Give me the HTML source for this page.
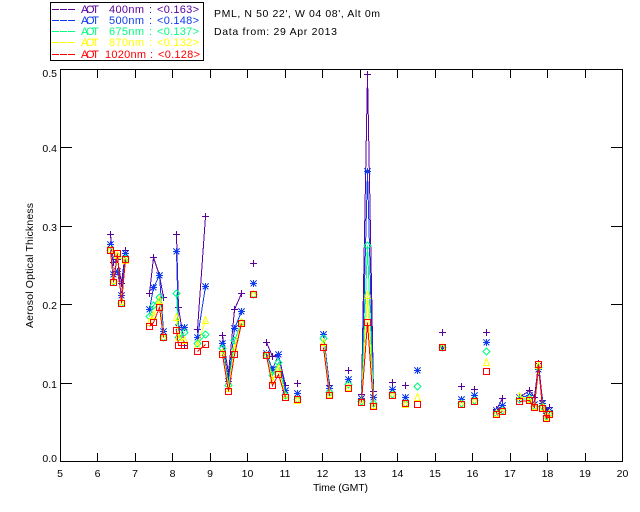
<!DOCTYPE html>
<html><head><meta charset="utf-8"><style>
html,body{margin:0;padding:0;background:#fff;width:640px;height:512px;overflow:hidden}
svg{display:block}
text{font-family:"Liberation Sans",sans-serif;font-size:10.5px;fill:#000}
.l{font-size:11px}
.p{fill:#5a009d}.b{fill:#0f3cf0}.g{fill:#00ff80}.y{fill:#ffff00}.r{fill:#ff0000}
</style></head><body>
<svg width="640" height="512" viewBox="0 0 640 512" xmlns="http://www.w3.org/2000/svg">
<defs>
<marker id="mp" markerUnits="userSpaceOnUse" markerWidth="13" markerHeight="13" refX="6.5" refY="6.5" overflow="visible"><path d="M3 6.5H10M6.5 3V10" fill="none" stroke="#5a009d" stroke-width="1" shape-rendering="crispEdges"/></marker>
<marker id="ms" markerUnits="userSpaceOnUse" markerWidth="13" markerHeight="13" refX="6.5" refY="6.5" overflow="visible"><path d="M3 6.5H10M6.5 3V10M3.5 3.5L9.5 9.5M9.5 3.5L3.5 9.5" fill="none" stroke="#0f3cf0" stroke-width="1" shape-rendering="crispEdges"/><rect x="5" y="5" width="3" height="3" fill="#0f3cf0" shape-rendering="crispEdges"/></marker>
<marker id="md" markerUnits="userSpaceOnUse" markerWidth="13" markerHeight="13" refX="6.5" refY="6.5" overflow="visible"><path d="M6.5 3L10 6.5L6.5 10L3 6.5Z" fill="none" stroke="#00ff80" stroke-width="1" shape-rendering="crispEdges"/></marker>
<marker id="mt" markerUnits="userSpaceOnUse" markerWidth="13" markerHeight="13" refX="6.5" refY="6.5" overflow="visible"><path d="M6.5 2.5L9.5 9.5H3.5Z" fill="none" stroke="#ffff00" stroke-width="1" shape-rendering="crispEdges"/></marker>
<marker id="mq" markerUnits="userSpaceOnUse" markerWidth="13" markerHeight="13" refX="6.5" refY="6.5" overflow="visible"><rect x="3.5" y="3.5" width="6" height="6" fill="none" stroke="#ff0000" stroke-width="1" shape-rendering="crispEdges"/></marker>
</defs>

<!-- legend box -->
<rect x="50.5" y="2.5" width="153" height="58" fill="none" stroke="#000" shape-rendering="crispEdges"/>
<g stroke-dasharray="7 1" shape-rendering="crispEdges">
<path d="M52 9.5H75" stroke="#5a009d"/>
<path d="M52 20.5H75" stroke="#0f3cf0"/>
<path d="M52 31.5H75" stroke="#00ff80"/>
<path d="M52 42.5H75" stroke="#ffff00"/>
<path d="M52 54.5H75" stroke="#ff0000"/>
</g>
<text class="l p" x="81" y="13" textLength="18">AOT</text><text class="l p" x="109" y="13" textLength="35">400nm</text><text class="l p" x="149" y="13">:</text><text class="l p" x="157" y="13" textLength="42">&lt;0.163&gt;</text>
<text class="l b" x="81" y="24" textLength="18">AOT</text><text class="l b" x="109" y="24" textLength="35">500nm</text><text class="l b" x="149" y="24">:</text><text class="l b" x="157" y="24" textLength="42">&lt;0.148&gt;</text>
<text class="l g" x="81" y="35" textLength="18">AOT</text><text class="l g" x="109" y="35" textLength="35">675nm</text><text class="l g" x="149" y="35">:</text><text class="l g" x="157" y="35" textLength="42">&lt;0.137&gt;</text>
<text class="l y" x="81" y="46" textLength="18">AOT</text><text class="l y" x="109" y="46" textLength="35">870nm</text><text class="l y" x="149" y="46">:</text><text class="l y" x="157" y="46" textLength="42">&lt;0.132&gt;</text>
<text class="l r" x="81" y="58" textLength="18">AOT</text><text class="l r" x="105" y="58" textLength="41">1020nm</text><text class="l r" x="150" y="58">:</text><text class="l r" x="158" y="58" textLength="42">&lt;0.128&gt;</text>
<text x="214" y="17" textLength="166" lengthAdjust="spacing">PML, N 50 22', W 04 08', Alt 0m</text>
<text x="214" y="35" textLength="123" lengthAdjust="spacing">Data from: 29 Apr 2013</text>

<!-- axes -->
<g fill="none" stroke="#000" shape-rendering="crispEdges">
<rect x="60.5" y="69.5" width="562" height="392"/>
<path d="M97.5 461V453M135.5 461V453M172.5 461V453M210.5 461V453M247.5 461V453M285.5 461V453M322.5 461V453M360.5 461V453M397.5 461V453M435.5 461V453M472.5 461V453M510.5 461V453M547.5 461V453M585.5 461V453"/>
<path d="M97.5 70V78M135.5 70V78M172.5 70V78M210.5 70V78M247.5 70V78M285.5 70V78M322.5 70V78M360.5 70V78M397.5 70V78M435.5 70V78M472.5 70V78M510.5 70V78M547.5 70V78M585.5 70V78"/>
<path d="M61 147.5H72M61 226.5H72M61 304.5H72M61 383.5H72"/>
<path d="M622 147.5H611M622 226.5H611M622 304.5H611M622 383.5H611"/>
</g>
<g text-anchor="end">
<text x="57" y="77">0.5</text><text x="57" y="152">0.4</text><text x="57" y="231">0.3</text><text x="57" y="309">0.2</text><text x="57" y="388">0.1</text><text x="57" y="462">0.0</text>
</g>
<g text-anchor="middle">
<text x="60" y="477">5</text><text x="97.5" y="477">6</text><text x="135" y="477">7</text><text x="172.5" y="477">8</text><text x="210" y="477">9</text><text x="247.5" y="477">10</text><text x="285" y="477">11</text><text x="322.5" y="477">12</text><text x="360" y="477">13</text><text x="397.5" y="477">14</text><text x="435" y="477">15</text><text x="472.5" y="477">16</text><text x="510" y="477">17</text><text x="547.5" y="477">18</text><text x="585" y="477">19</text><text x="622.5" y="477">20</text>
</g>
<text x="313" y="491" textLength="55" lengthAdjust="spacing">Time (GMT)</text>
<text transform="translate(33,328) rotate(-90)" textLength="125" lengthAdjust="spacing">Aerosol Optical Thickness</text>

<!-- data -->
<g fill="none" shape-rendering="crispEdges" transform="translate(.5 .5)">
<path stroke="#5a009d" marker-start="url(#mp)" marker-mid="url(#mp)" marker-end="url(#mp)" d="M110 234L113 262L117 259L121 283L125 250M149 293L153 257L159 275L163 297M176 234L178 307L184 345M197 329L205 216M222 335L228 373L234 309L241 293M253 263L253 263M266 342L272 356L278 354L285 385M297 383L297 383M323 334L329 385M348 370L348 370M361 394L367 74L373 391M392 382L392 382M405 385L405 385M417 370L417 370M442 332L442 332M461 386L461 386M474 389L474 389M486 332L486 332M496 409L502 398M519 397L529 390L534 397L538 363L542 400L546 410L549 407"/>
<path stroke="#0f3cf0" marker-start="url(#ms)" marker-mid="url(#ms)" marker-end="url(#ms)" d="M110 244L113 274L117 271L121 295L125 253M149 309L153 287L159 275L163 331M176 251L178 327L184 327M197 337L205 286M222 343L228 381L234 328L241 311M253 283L253 283M266 353L272 369L278 354L285 390M297 393L297 393M323 334L329 388M348 379L348 379M361 398L367 171L373 397M392 389L392 389M405 397L405 397M417 370L417 370M442 347L442 347M461 399L461 399M474 395L474 395M486 342L486 342M496 410L502 405M519 397L529 395L534 404L538 369L542 403L546 413L549 410"/>
<path stroke="#00ff80" marker-start="url(#md)" marker-mid="url(#md)" marker-end="url(#md)" d="M110 250L113 281L117 256L121 303L125 258M149 316L153 305L159 297L163 337M176 293L178 337L184 332M197 343L205 334M222 348L228 385L234 340L241 322M253 294L253 294M266 355L272 375L278 362L285 395M297 399L297 399M323 338L329 392M348 384L348 384M361 401L367 245L373 403M392 394L392 394M405 403L405 403M417 386L417 386M442 347L442 347M461 403L461 403M474 400L474 400M486 351L486 351M496 413L502 410M519 399L529 398L534 406L538 367L542 406L546 416L549 413"/>
<path stroke="#ffff00" marker-start="url(#mt)" marker-mid="url(#mt)" marker-end="url(#mt)" d="M110 249L113 280L117 255L121 301L125 260M149 322L153 315L159 300L163 337M176 317L178 337L184 340M197 345L205 320M222 352L228 388L234 348L241 322M253 294L253 294M266 355L272 380L278 368L285 397M297 400L297 400M323 342L329 394M348 387L348 387M361 402L367 295L373 405M392 395L392 395M405 404L405 404M417 397L417 397M442 347L442 347M461 404L461 404M474 401L474 401M486 362L486 362M496 413L502 411M519 396L529 399L534 406L538 365L542 407L546 417L549 413"/>
<path stroke="#ff0000" marker-start="url(#mq)" marker-mid="url(#mq)" marker-end="url(#mq)" d="M110 250L113 282L117 253L121 303L125 259M149 326L153 322L159 307L163 337M176 330L178 345L184 345M197 351L205 344M222 354L228 391L234 354L241 323M253 294L253 294M266 355L272 385L278 374L285 397M297 399L297 399M323 347L329 395M348 388L348 388M361 402L367 322L373 406M392 395L392 395M405 403L405 403M417 404L417 404M442 347L442 347M461 404L461 404M474 401L474 401M486 371L486 371M496 414L502 411M519 401L529 400L534 407L538 364L542 408L546 418L549 414"/>
</g>
</svg>
</body></html>
